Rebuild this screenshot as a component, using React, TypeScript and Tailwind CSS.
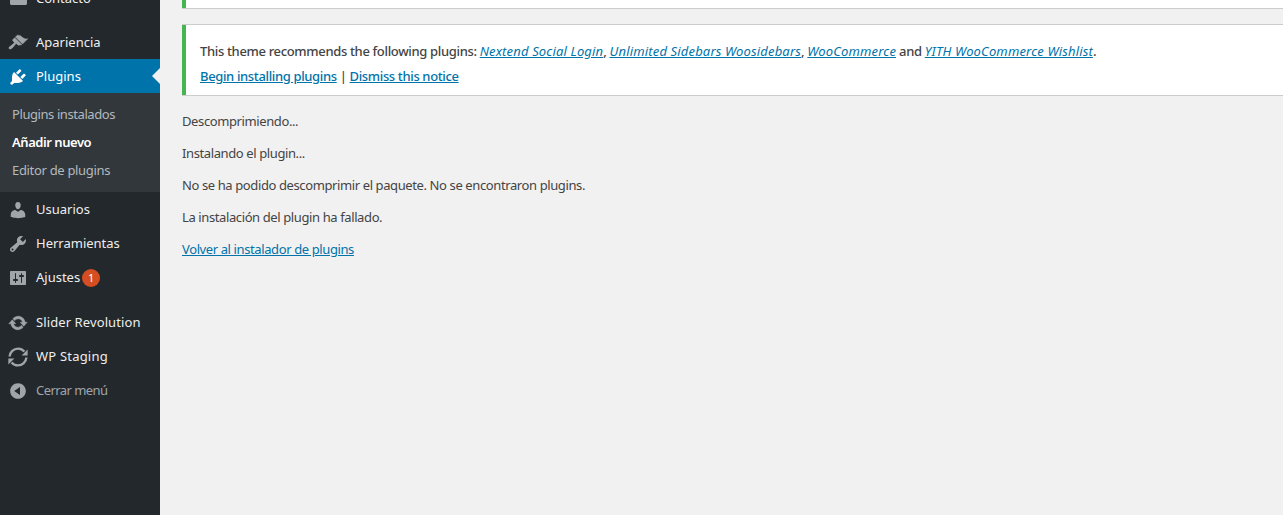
const FONT = "font-['Noto_Sans','Open_Sans',sans-serif]";

function Icon({ d, active, className = "", fat = false }: { d: string; active?: boolean; className?: string; fat?: boolean }) {
  const c = active ? "#ffffff" : "#a0a5aa";
  return (
    <svg viewBox="0 0 20 20" className={`w-5 h-5 shrink-0 ${className}`} fill={c} stroke={fat ? c : "none"} strokeWidth={fat ? 0.5 : 0}>
      <path d={d} />
    </svg>
  );
}

const I = {
  mail: "M19 14.5v-9c0-.83-.67-1.5-1.5-1.5H3.49c-.83 0-1.5.67-1.5 1.5v9c0 .83.67 1.5 1.5 1.5H17.5c.83 0 1.5-.67 1.5-1.5z",
  appearance: "M14.48 11.06L7.41 3.99l1.5-1.5c.5-.56 2.3-.47 3.51.32 1.21.8 1.43 1.28 2.91 2.1 1.18.64 2.45 1.26 4.45.85zm-.71.71L6.7 4.7 4.93 6.47c-.39.39-.39 1.02 0 1.41l1.06 1.06c.39.39.39 1.03 0 1.42-.6.6-1.43 1.11-2.21 1.69-.35.26-.7.53-1.01.84C1.43 13.23.4 14.96 1.2 15.8c.79.85 2.52-.18 3.86-1.58.3-.3.58-.66.84-1.01.58-.78 1.09-1.61 1.69-2.21.39-.39 1.03-.39 1.42 0l1.06 1.06c.39.39 1.02.39 1.41 0z",
  plugins: "M13.11 4.36L9.87 7.6 8 5.73l3.24-3.24c.35-.34 1.05-.2 1.56.32.52.51.66 1.21.31 1.55zm-8 1.77l.91-1.12 9.01 9.01-1.19.84c-.71.71-2.63 1.16-3.82 1.16H6.14L4.9 17.26c-.59.59-1.54.59-2.12 0-.59-.58-.59-1.53 0-2.12l1.24-1.24v-3.88c0-1.13.4-3.19 1.09-3.89zm7.26 3.97l3.24-3.24c.34-.35 1.04-.21 1.55.31.52.51.66 1.21.31 1.55l-3.24 3.25z",
  users: "M10 9.25c-2.27 0-2.73-3.44-2.73-3.44C7 4.02 7.82 2 9.97 2c2.16 0 2.98 2.02 2.71 3.81 0 0-.41 3.44-2.68 3.44zm0 2.57L12.72 10c2.39 0 4.52 2.33 4.52 4.53v2.49s-3.65 1.13-7.24 1.13c-3.65 0-7.24-1.13-7.24-1.13v-2.49c0-2.25 1.94-4.48 4.47-4.48z",
  tools: "M16.68 9.77c-1.34 1.34-3.3 1.67-4.95.99l-5.41 6.52c-.99.99-2.59.99-3.58 0s-.99-2.59 0-3.57l6.52-5.42c-.68-1.65-.35-3.61.99-4.95 1.28-1.28 3.12-1.62 4.72-1.06l-2.89 2.89 2.82 2.82 2.86-2.87c.53 1.58.18 3.39-1.08 4.65zM3.81 16.21c.4.39 1.04.39 1.43 0 .4-.4.4-1.04 0-1.43-.39-.4-1.03-.4-1.43 0-.39.39-.39 1.03 0 1.43z",
  settings: "M18 16V4c0-.55-.45-1-1-1H3c-.55 0-1 .45-1 1v12c0 .55.45 1 1 1h14c.55 0 1-.45 1-1zM8 11h1c.55 0 1 .45 1 1s-.45 1-1 1H8v1.5c0 .28-.22.5-.5.5s-.5-.22-.5-.5V13H6c-.55 0-1-.45-1-1s.45-1 1-1h1V5.5c0-.28.22-.5.5-.5s.5.22.5.5V11zm5-2h-1c-.55 0-1-.45-1-1s.45-1 1-1h1V5.5c0-.28.22-.5.5-.5s.5.22.5.5V7h1c.55 0 1 .45 1 1s-.45 1-1 1h-1v5.5c0 .28-.22.5-.5.5s-.5-.22-.5-.5V9z",
  update: "M10.2 3.28c3.53 0 6.43 2.61 6.92 6h2.08l-3.5 4-3.5-4h2.32c-.45-1.97-2.21-3.45-4.32-3.45-1.45 0-2.73.71-3.54 1.78L4.95 5.66C6.23 4.2 8.11 3.28 10.2 3.28zm-.4 13.44c-3.52 0-6.43-2.61-6.92-6H.8l3.5-4c1.17 1.33 2.33 2.67 3.5 4H5.48c.45 1.97 2.21 3.45 4.32 3.45 1.45 0 2.73-.71 3.54-1.78l1.71 1.95c-1.28 1.46-3.15 2.38-5.25 2.38z",
  collapse: "M10 2.16c4.33 0 7.84 3.51 7.84 7.84s-3.51 7.84-7.84 7.84S2.16 14.33 2.16 10 5.71 2.16 10 2.16zm2 11.72V6.12L6.18 9.97z",
};

function Staging() {
  return (
    <svg viewBox="0 0 20 20" className="w-5 h-5 shrink-0" fill="none" stroke="#a0a5aa" strokeWidth="2.4">
      <path d="M1.6 9.5C2 5 5.6 1.6 10 1.6c2.6 0 4.9 1.2 6.4 3" />
      <path d="M18.4 10.5c-.4 4.5-4 7.9-8.4 7.9-2.6 0-4.9-1.2-6.4-3" />
      <path d="M19.6 2.4v6h-6z" fill="#a0a5aa" stroke="none" />
      <path d="M.4 17.6v-6h6z" fill="#a0a5aa" stroke="none" />
    </svg>
  );
}

function MenuRow({ icon, label, children, track = "tracking-[0px]" }: { icon: React.ReactNode; label: string; children?: React.ReactNode; track?: string }) {
  return (
    <div className="h-[34px] pt-[2px] flex items-center pl-[8px] text-[#eeeeee] text-[13px]">
      {icon}
      <span className={`ml-[8px] ${track}`}>{label}</span>
      {children}
    </div>
  );
}

const linkCls = "text-[#0073aa] underline";
const emCls = "italic font-normal text-[#0073aa] underline tracking-[0.16px]";

export default function App() {
  return (
    <div className={`${FONT} flex h-[515px] w-[1283px] overflow-hidden bg-[#f1f1f1] text-[13px] text-[#444444]`}>
      <aside className="w-[160px] shrink-0 bg-[#23282d] flex flex-col">
        <div className="-mt-[19px]">
          <MenuRow icon={<Icon d={I.mail} />} label="Contacto" />
        </div>
        <div className="mt-[10px]">
          <MenuRow icon={<Icon d={I.appearance} fat />} label="Apariencia" />
        </div>
        <div className="relative h-[34px] pt-[2px] flex items-center pl-[8px] bg-[#0073aa] text-white">
          <Icon d={I.plugins} active />
          <span className="ml-[8px]">Plugins</span>
          <span className="absolute right-0 top-1/2 -translate-y-1/2 border-y-[8px] border-y-transparent border-r-[8px] border-r-[#f1f1f1]" />
        </div>
        <div className="bg-[#32373c] h-[99px] flex flex-col pt-[8px] text-[13px] text-[#b4b9be]">
          <div className="h-[28px] flex items-center pl-[12px] tracking-[-0.42px]">Plugins instalados</div>
          <div className="h-[28px] flex items-center pl-[12px] tracking-[-0.45px] font-semibold text-white">Añadir nuevo</div>
          <div className="h-[28px] flex items-center pl-[12px] tracking-[-0.32px]">Editor de plugins</div>
        </div>
        <MenuRow icon={<Icon d={I.users} />} label="Usuarios" />
        <MenuRow icon={<Icon d={I.tools} />} label="Herramientas" />
        <MenuRow icon={<Icon d={I.settings} />} label="Ajustes">
          <span className="ml-[2px] w-[18px] h-[18px] rounded-full bg-[#d54e21] text-white text-[11px] flex items-center justify-center">1</span>
        </MenuRow>
        <div className="mt-[11px]">
          <MenuRow icon={<Icon d={I.update} fat />} label="Slider Revolution" track="tracking-[0.1px]" />
        </div>
        <MenuRow icon={<Staging />} label="WP Staging" track="tracking-[0.2px]" />
        <div className="h-[34px] pt-[2px] flex items-center pl-[8px] text-[#a0a5aa]">
          <Icon d={I.collapse} />
          <span className="ml-[8px] tracking-[-0.56px]">Cerrar menú</span>
        </div>
      </aside>
      <main className="flex-1 min-w-0 pl-[22px] -mr-[2px]">
        <div className="h-[8px] bg-white border-l-4 border-[#46b450] shadow-[0_1px_0_#cccccc]" />
        <div className="mt-[17px] h-[70px] bg-white border-l-4 border-[#46b450] shadow-[0_1px_0_#cccccc,0_-1px_0_#cccccc] pl-[14px] pt-[14px]">
          <p className="h-[25px] leading-[25px] font-medium tracking-[-0.34px] whitespace-nowrap">
            This theme recommends the following plugins:{" "}
            <a className={emCls}>Nextend Social Login</a>,{" "}
            <a className={emCls}>Unlimited Sidebars Woosidebars</a>,{" "}
            <a className={emCls}>WooCommerce</a> and{" "}
            <a className={emCls}>YITH WooCommerce Wishlist</a>.
          </p>
          <p className="h-[25px] leading-[25px] font-medium tracking-[-0.36px]">
            <a className={linkCls}>Begin installing plugins</a> | <a className={linkCls}>Dismiss this notice</a>
          </p>
        </div>
        <div className="mt-[17px] tracking-[-0.39px]">
          <p className="h-[18px] leading-[18px]">Descomprimiendo...</p>
          <p className="h-[18px] leading-[18px] mt-[14px]">Instalando el plugin...</p>
          <p className="h-[18px] leading-[18px] mt-[14px]">No se ha podido descomprimir el paquete. No se encontraron plugins.</p>
          <p className="h-[18px] leading-[18px] mt-[14px]">La instalación del plugin ha fallado.</p>
          <p className="h-[18px] leading-[18px] mt-[14px]"><a className={linkCls}>Volver al instalador de plugins</a></p>
        </div>
      </main>
    </div>
  );
}
